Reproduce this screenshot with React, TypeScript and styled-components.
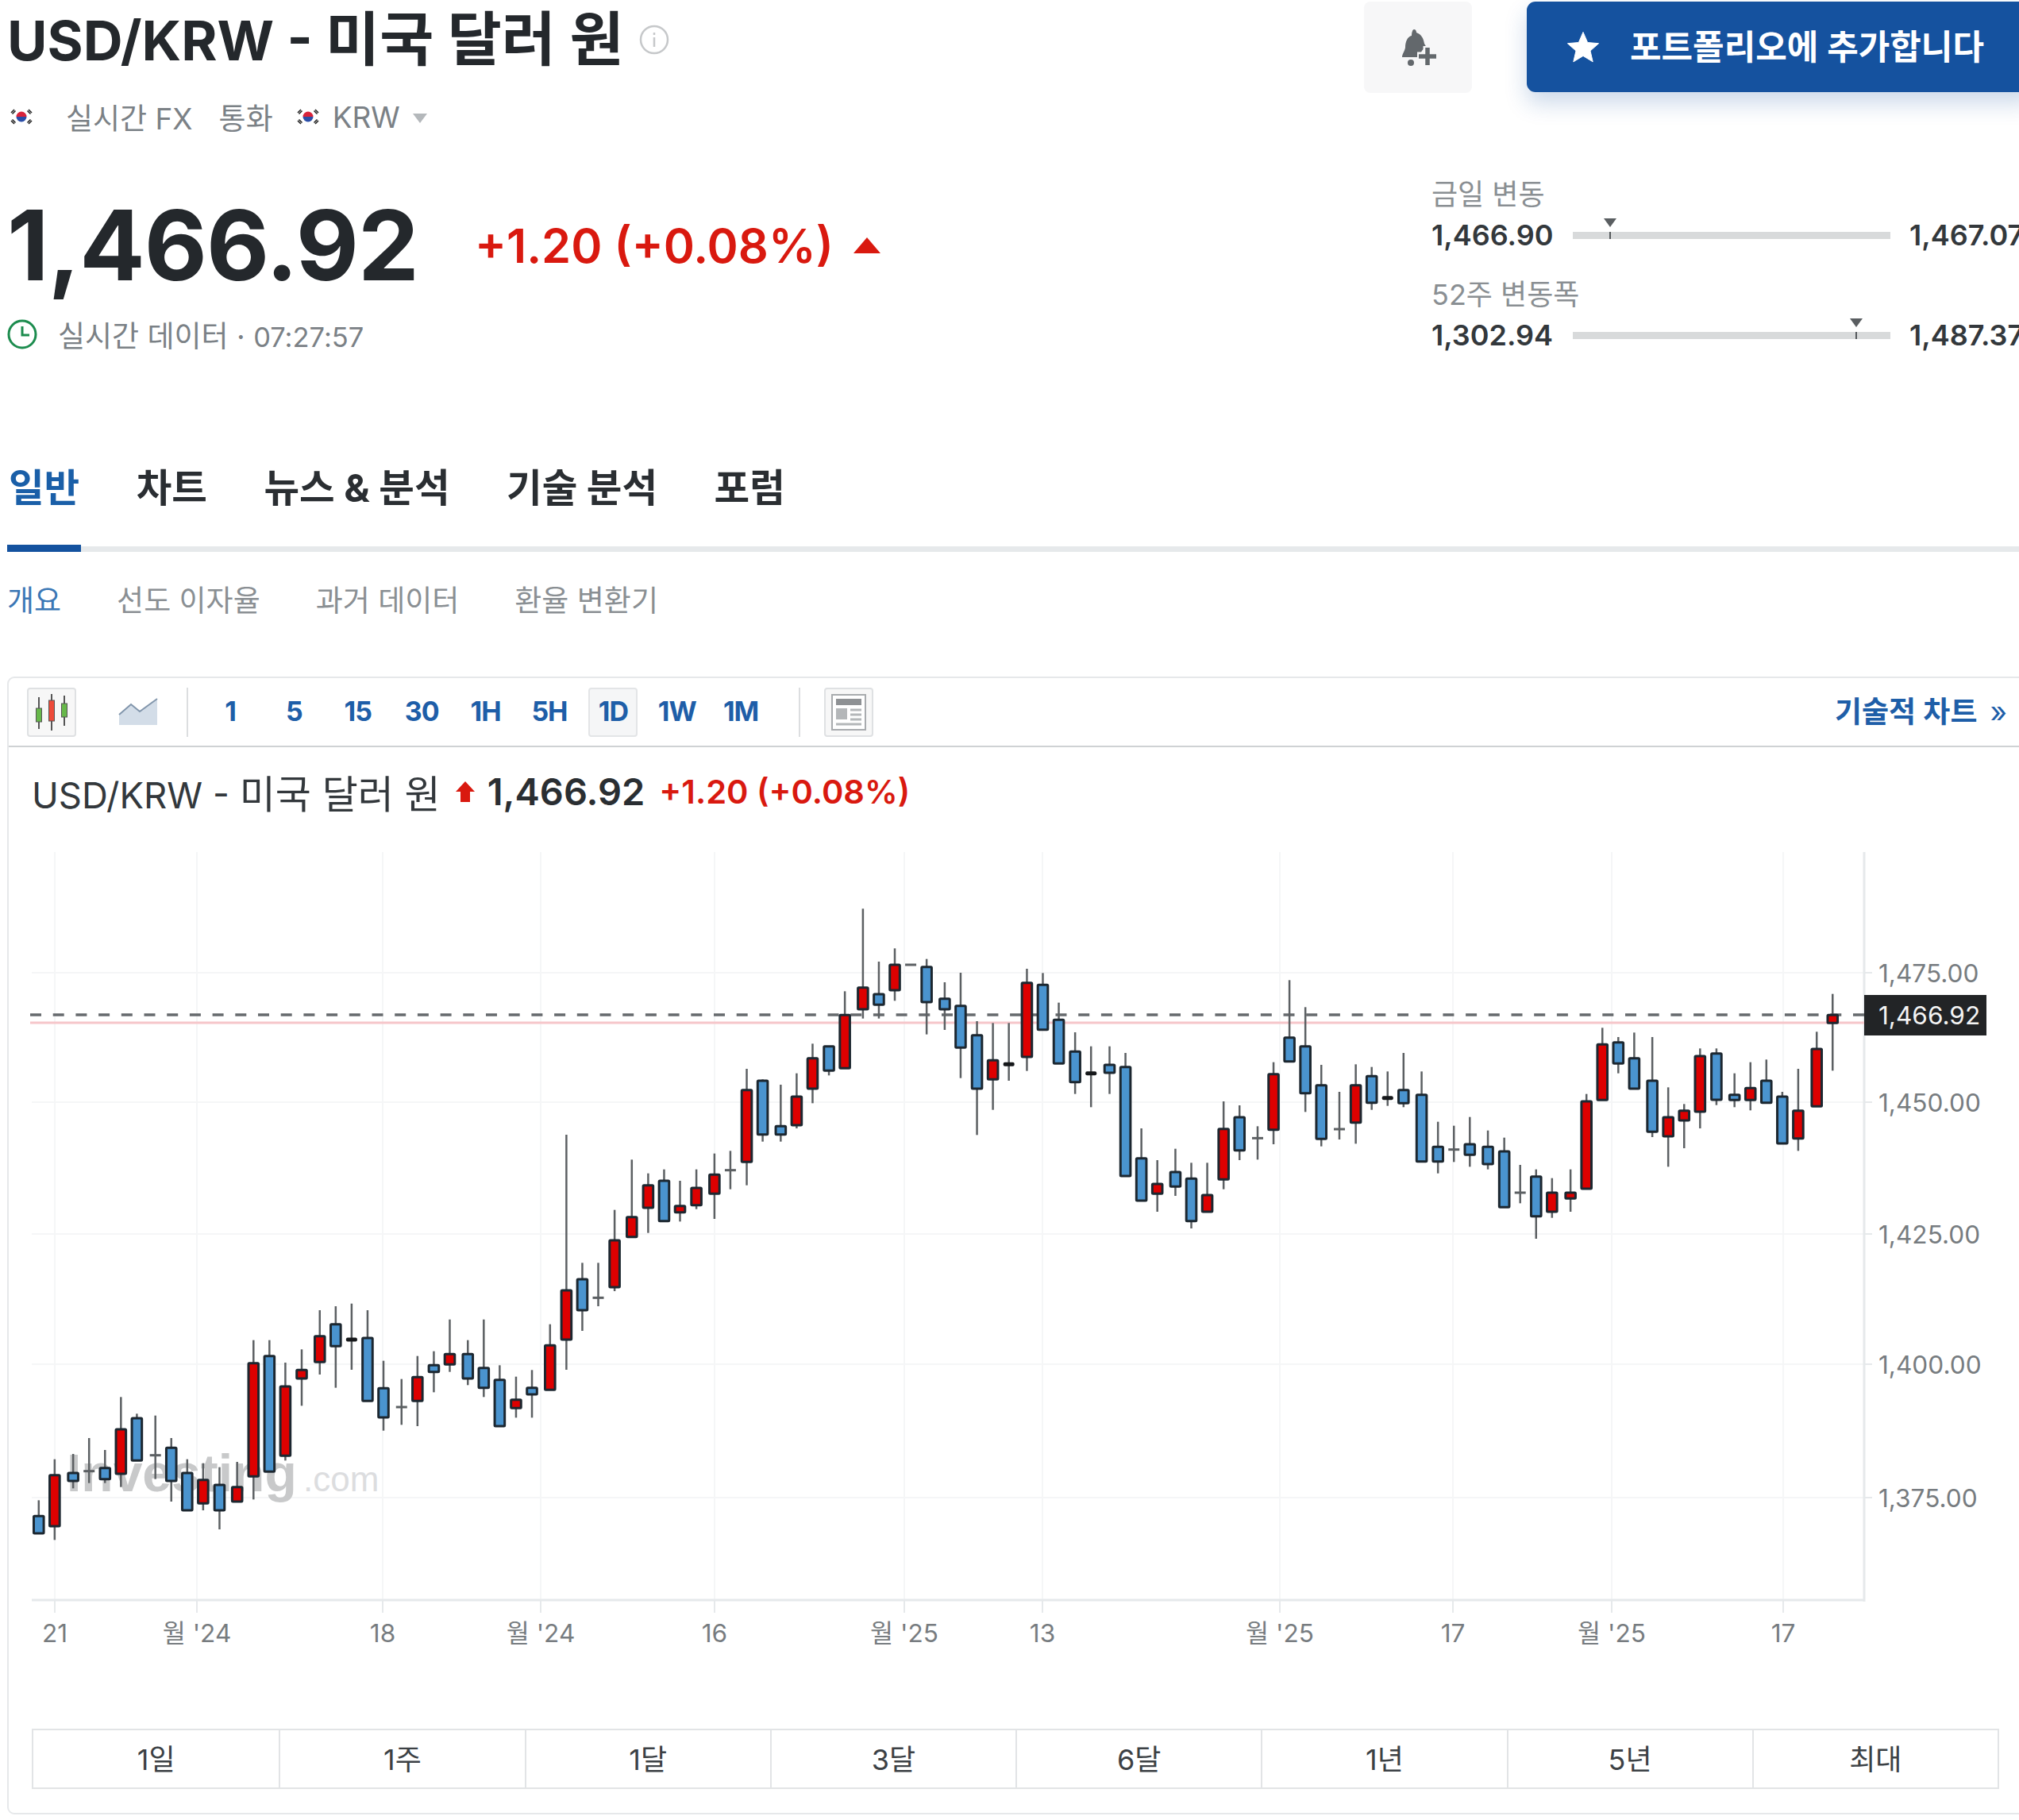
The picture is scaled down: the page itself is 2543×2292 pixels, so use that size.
import React from "react";
import styled, { createGlobalStyle } from "styled-components";

const GlobalStyle = createGlobalStyle`
  html, body { margin: 0; padding: 0; background: #fff; }
  body { font-family: Inter, "Noto Sans CJK KR", "Noto Sans", sans-serif; color: #24282c; }
`;

const Page = styled.div`
  width: 2543px;
  height: 2292px;
  overflow: hidden;
`;

const Inner = styled.div`
  width: 2569px;
  padding-left: 9px;
  box-sizing: border-box;
`;

const Header = styled.header`
  display: flex;
  height: 585px;
`;

const LeftCol = styled.div`
  width: 1709px;
  flex-shrink: 0;
`;

const TitleRow = styled.div`
  display: flex;
  align-items: center;
  gap: 19px;
  height: 100px;
`;

const Title = styled.h1`
  margin: 0;
  font-size: 69px;
  line-height: 100px;
  font-weight: 700;
  color: #24282c;
  white-space: nowrap;
`;

const TitleKo = styled.span`
  font-size: 74px;
`;

const Meta = styled.div`
  display: flex;
  align-items: center;
  height: 46px;
  margin-top: 24px;
  font-size: 37px;
  color: #7b8186;
`;

const MetaText = styled.span<{ $left: number }>`
  margin-left: ${(p) => p.$left}px;
  white-space: nowrap;
`;

const FlagWrap = styled.span<{ $left: number }>`
  display: inline-flex;
  margin-left: ${(p) => p.$left}px;
`;

const Caret = styled.span`
  width: 0;
  height: 0;
  margin: 4px 0 0 16px;
  border-left: 9px solid transparent;
  border-right: 9px solid transparent;
  border-top: 12px solid #b4b8bb;
`;

const PriceRow = styled.div`
  display: flex;
  align-items: center;
  height: 140px;
  margin-top: 69px;
`;

const Price = styled.div`
  font-size: 122px;
  font-weight: 700;
  color: #24282c;
  line-height: 140px;
  letter-spacing: -1px;
`;

const Change = styled.div`
  margin-left: 71px;
  font-size: 59.5px;
  font-weight: 600;
  color: #d9190f;
  white-space: nowrap;
`;

const UpTriangle = styled.span`
  width: 0;
  height: 0;
  margin-left: 25px;
  border-left: 17px solid transparent;
  border-right: 17px solid transparent;
  border-bottom: 20px solid #d9190f;
`;

const LiveRow = styled.div`
  display: flex;
  align-items: center;
  gap: 26px;
  height: 46px;
  margin-top: 19px;
  font-size: 37px;
  color: #7b8186;
`;

const LiveTime = styled.span`
  font-size: 34.5px;
`;

const RightCol = styled.div`
  flex: 1;
  padding-top: 2px;
`;

const Actions = styled.div`
  display: flex;
  gap: 69px;
  height: 115px;
`;

const BellButton = styled.button`
  display: flex;
  align-items: center;
  justify-content: center;
  width: 136px;
  height: 115px;
  padding: 0;
  border: none;
  border-radius: 8px;
  background: #f7f7f8;
`;

const PortfolioButton = styled.button`
  display: flex;
  align-items: center;
  gap: 38px;
  width: 640px;
  height: 114px;
  padding: 0 0 0 50px;
  border: none;
  border-radius: 11px;
  background: #15529f;
  color: #fff;
  font-family: inherit;
  font-size: 43px;
  font-weight: 600;
  white-space: nowrap;
  box-shadow: 0 14px 28px rgba(21, 82, 159, 0.22);
`;

const PortfolioLabel = styled.span`
  padding-bottom: 6px;
`;

const Ranges = styled.div`
  padding: 104px 0 0 85px;
`;

const RangeLabel = styled.div<{ $top?: number }>`
  margin-top: ${(p) => p.$top ?? 0}px;
  height: 48px;
  line-height: 48px;
  font-size: 36px;
  color: #8a8f93;
  white-space: nowrap;
`;

const RangeRow = styled.div`
  display: flex;
  align-items: center;
  height: 52px;
  margin-top: 1px;
  font-size: 36px;
  font-weight: 600;
  color: #33383c;
`;

const RangeLow = styled.span`
  width: 178px;
  flex-shrink: 0;
`;

const RangeHigh = styled.span`
  margin-left: 24px;
`;

const RangeBar = styled.div`
  position: relative;
  width: 400px;
  height: 9px;
  background: #d8dadb;
`;

const RangeMarker = styled.div<{ $at: number }>`
  position: absolute;
  left: ${(p) => p.$at}px;
  top: 0;
  width: 2px;
  height: 9px;
  background: #55595c;

  &::before {
    content: "";
    position: absolute;
    left: -7px;
    top: -17px;
    border-left: 8px solid transparent;
    border-right: 8px solid transparent;
    border-top: 11px solid #5a5e61;
  }
`;

const TabBar = styled.nav`
  display: flex;
  gap: 67.5px;
  height: 110px;
  box-sizing: border-box;
  border-bottom: 7px solid #e6e9eb;
`;

const Tab = styled.a<{ $active?: boolean }>`
  height: 110px;
  box-sizing: border-box;
  padding: 0 2px;
  line-height: 60px;
  font-size: 48.5px;
  font-weight: 700;
  white-space: nowrap;
  color: ${(p) => (p.$active ? "#1a5fa8" : "#2a2e32")};
  border-bottom: ${(p) => (p.$active ? "9px solid #14529f" : "none")};
`;

const SubTabs = styled.div`
  display: flex;
  gap: 70px;
  margin-top: 37px;
  height: 50px;
  line-height: 50px;
  font-size: 37px;
`;

const SubTab = styled.a<{ $active?: boolean }>`
  color: ${(p) => (p.$active ? "#3b77b5" : "#8a8f93")};
  white-space: nowrap;
`;

const ChartCard = styled.section`
  margin-top: 70px;
  box-sizing: border-box;
  height: 1433px;
  border: 2px solid #e6e8ea;
  border-radius: 9px;
  background: #fff;
`;

const Toolbar = styled.div`
  display: flex;
  align-items: center;
  height: 85px;
  padding: 0 39px 0 23px;
  border-bottom: 2px solid #cfd2d4;
`;

const IconButton = styled.button<{ $boxed?: boolean; $left?: number }>`
  display: flex;
  align-items: center;
  justify-content: center;
  width: 62px;
  height: 62px;
  padding: 0;
  margin-left: ${(p) => p.$left ?? 0}px;
  box-sizing: border-box;
  border: ${(p) => (p.$boxed ? "2px solid #dfe1e3" : "none")};
  border-radius: 4px;
  background: ${(p) => (p.$boxed ? "#f7f7f7" : "transparent")};
`;

const Divider = styled.div<{ $left: number; $right: number }>`
  width: 2px;
  height: 62px;
  margin: 0 ${(p) => p.$right}px 0 ${(p) => p.$left}px;
  background: #dcdee0;
`;

const Intervals = styled.div`
  display: flex;
  gap: 18.4px;
`;

const Interval = styled.button<{ $active?: boolean }>`
  width: 62px;
  height: 62px;
  padding: 0 0 2px;
  box-sizing: border-box;
  border: ${(p) => (p.$active ? "2px solid #e3e5e7" : "2px solid transparent")};
  border-radius: 4px;
  background: ${(p) => (p.$active ? "#f5f6f7" : "transparent")};
  color: #1e5ea8;
  font-family: inherit;
  font-size: 34px;
  font-weight: 700;
  letter-spacing: -1px;
`;

const TechLink = styled.a`
  margin-left: auto;
  padding-bottom: 6px;
  font-size: 37px;
  font-weight: 600;
  color: #1e5ea8;
  white-space: nowrap;
`;

const TechChevron = styled.span`
  margin-left: 16px;
  font-weight: 400;
`;

const QuoteRow = styled.div`
  display: flex;
  align-items: center;
  height: 116px;
  box-sizing: border-box;
  padding: 0 0 5px 29px;
  white-space: nowrap;
`;

const QuoteName = styled.span`
  font-size: 45.5px;
  color: #33383c;
`;

const QuoteKo = styled.span`
  font-size: 49px;
`;

const QuotePrice = styled.span`
  margin-left: 15px;
  font-size: 47px;
  font-weight: 600;
  color: #2a2e32;
`;

const QuoteChange = styled.span`
  margin-left: 18px;
  font-size: 41.6px;
  font-weight: 600;
  color: #d9190f;
`;

const ChartSvg = styled.svg`
  display: block;
`;

const Watermark = styled.text<{ $light?: boolean }>`
  font-family: "Liberation Sans", Arial, sans-serif;
  font-size: ${(p) => (p.$light ? 44 : 66)}px;
  font-weight: ${(p) => (p.$light ? 400 : 700)};
  fill: ${(p) => (p.$light ? "#dcdddf" : "#c8c9ca")};
`;

const AxisLabel = styled.text`
  font-family: Inter, "Noto Sans CJK KR", sans-serif;
  font-size: 31.6px;
  fill: #777c80;
`;

const LastLabel = styled.text`
  font-family: Inter, sans-serif;
  font-size: 31.6px;
  fill: #f4f4f4;
`;

const PeriodBar = styled.div`
  display: grid;
  grid-template-columns: repeat(8, 1fr);
  width: 2478px;
  height: 76px;
  margin: 66px 0 0 29px;
  box-sizing: border-box;
  border: 2px solid #e2e4e6;
`;

const Period = styled.div`
  display: flex;
  align-items: center;
  justify-content: center;
  padding-bottom: 5px;
  font-size: 36px;
  color: #3c4145;

  & + & {
    border-left: 2px solid #e2e4e6;
  }
`;

const KoreanFlag = () => (
  <svg width="30" height="22" viewBox="0 0 30 22">
    <rect width="30" height="22" fill="#fff" />
    <path d="M8.5 11a6.5 6.5 0 0 1 13 0z" fill="#d8233b" />
    <path d="M8.5 11a6.5 6.5 0 0 0 13 0z" fill="#2a4ea8" />
    <g stroke="#222" strokeWidth="1.6">
      <path d="M2 6l4-4M3.5 7.5l4-4" />
      <path d="M28 6l-4-4M26.5 7.5l-4-4" />
      <path d="M2 16l4 4M3.5 14.5l4 4" />
      <path d="M28 16l-4 4M26.5 14.5l-4 4" />
    </g>
  </svg>
);

const InfoIcon = () => (
  <svg width="38" height="38" viewBox="0 0 38 38" fill="none">
    <circle cx="19" cy="19" r="17" stroke="#c6c8ca" strokeWidth="2.5" />
    <path d="M19 16v12M19 10v3" stroke="#c6c8ca" strokeWidth="2.5" />
  </svg>
);

const ClockIcon = () => (
  <svg width="38" height="38" viewBox="0 0 38 38" fill="none">
    <circle cx="19" cy="19" r="17" stroke="#1c8c4e" strokeWidth="3" />
    <path d="M19 9v11h9" stroke="#1c8c4e" strokeWidth="3" />
  </svg>
);

const BellPlusIcon = () => (
  <svg width="48" height="48" viewBox="0 0 48 48" style={{ marginLeft: 4 }}>
    <path
      d="M17 1c2 0 3 2 3 4 6 2 9 7 10 14l3 5c-5 1-8 5-8 12H2c0-4 3-7 4-12 0-8 3-14 8-15 0-4 1-8 3-8z"
      fill="#63686c"
    />
    <circle cx="13" cy="43" r="4" fill="#63686c" />
    <path d="M34 22v26M21 35h26" stroke="#f7f7f8" strokeWidth="11" />
    <path d="M34 24v22M23 35h22" stroke="#63686c" strokeWidth="5.5" />
  </svg>
);

const StarIcon = () => (
  <svg width="42" height="40" viewBox="0 0 42 40">
    <path
      d="M21 1.5l5.6 13 14 1.2-10.6 9.3 3.2 13.8L21 31.4 8.8 38.8 12 25 1.4 15.7l14-1.2z"
      fill="#fff"
      stroke="#fff"
      strokeLinejoin="round"
    />
  </svg>
);

const CandleIcon = () => (
  <svg width="46" height="50" viewBox="0 0 46 50">
    <g stroke="#555" strokeWidth="2">
      <path d="M7 6v40M23 2v46M39 4v38" />
    </g>
    <rect x="3.5" y="20" width="7" height="17" fill="#67b84a" stroke="#555" />
    <rect x="19.5" y="10" width="7" height="26" fill="#ee4b3a" stroke="#555" />
    <rect x="35.5" y="14" width="7" height="17" fill="#67b84a" stroke="#555" />
  </svg>
);

const AreaIcon = () => (
  <svg width="50" height="36" viewBox="0 0 50 36">
    <path d="M1 21l15-13 11 9L49 1v33H1z" fill="#d3dde8" />
    <path d="M1 21l15-13 11 9L49 1" fill="none" stroke="#8296ac" strokeWidth="2" />
  </svg>
);

const NewsIcon = () => (
  <svg width="46" height="50" viewBox="0 0 46 50">
    <rect x="2" y="3" width="42" height="44" fill="#fff" stroke="#a8abae" strokeWidth="2" />
    <rect x="7" y="8" width="32" height="8" fill="#8e9194" />
    <rect x="7" y="20" width="14" height="14" fill="#b4b7b9" />
    <path d="M25 22h14M25 28h14M25 34h14M7 40h32" stroke="#b4b7b9" strokeWidth="3" />
  </svg>
);

const ArrowUpIcon = () => (
  <svg width="26" height="28" viewBox="0 0 26 28" style={{ marginLeft: 18 }}>
    <path d="M13 1l12 13h-6v13H7V14H1z" fill="#d9190f" />
  </svg>
);

type Row = [number, number, number, number, number, string];

// [x, high, bodyTop, bodyBottom, low, kind], read off the crops; each block has its own scale
const firstBlock: Row[] = [
  [90, 1015, 1075, 1140, 1140, "b"], [127, 860, 920, 1113, 1165, "r"], [170, 840, 912, 942, 970, "b"],
  [207, 780, 905, 905, 950, "d"], [244, 825, 893, 935, 950, "b"], [281, 625, 747, 915, 965, "r"],
  [318, 688, 705, 865, 865, "b"], [361, 695, 845, 845, 935, "d"], [398, 780, 817, 942, 1020, "b"],
  [435, 860, 912, 1053, 1053, "b"], [472, 875, 938, 1027, 1053, "r"], [510, 890, 957, 1053, 1125, "b"],
  [551, 870, 965, 1020, 1020, "r"], [589, 410, 497, 925, 1012, "r"], [626, 410, 470, 907, 907, "b"],
  [663, 495, 585, 847, 865, "r"], [701, 445, 523, 555, 658, "r"], [743, 297, 395, 493, 540, "r"],
  [780, 282, 350, 433, 590, "b"], [817, 272, 408, 408, 522, "k"], [854, 297, 402, 640, 640, "b"],
  [891, 488, 592, 702, 752, "b"], [933, 557, 663, 663, 730, "d"], [970, 470, 550, 640, 735, "r"],
  [1008, 452, 505, 530, 607, "b"], [1045, 332, 463, 502, 530, "r"], [1087, 410, 463, 555, 580, "b"],
  [1124, 332, 515, 590, 625, "b"], [1161, 505, 560, 735, 735, "b"], [1199, 548, 635, 667, 703, "r"],
  [1236, 523, 590, 615, 703, "b"], [1278, 350, 430, 598, 598, "r"], [1316, -366, 222, 408, 522, "r"],
  [1353, 118, 180, 297, 375, "b"], [1390, 118, 250, 250, 282, "d"], [1428, -82, 33, 210, 225, "r"],
  [1468, -272, -55, 20, 20, "r"], [1506, -220, -175, -90, 5, "r"], [1543, -235, -192, -40, -40, "b"],
];

const middleBlock: Row[] = [
  [12, 1278, 1373, 1397, 1432, "r"], [50, 1235, 1305, 1370, 1385, "r"], [92, 1175, 1255, 1327, 1422, "r"],
  [129, 1165, 1238, 1238, 1310, "d"], [167, 855, 935, 1207, 1295, "r"], [204, 895, 900, 1103, 1130, "b"],
  [246, 915, 1072, 1103, 1130, "b"], [283, 872, 960, 1068, 1080, "r"], [320, 760, 815, 930, 985, "r"],
  [358, 770, 770, 862, 880, "b"], [395, 562, 652, 853, 853, "r"], [437, 250, 548, 630, 665, "r"],
  [474, 450, 573, 613, 665, "b"], [511, 400, 462, 558, 598, "r"], [548, 462, 462, 462, 462, "d"],
  [585, 440, 470, 603, 725, "b"], [627, 528, 590, 630, 708, "b"], [664, 492, 617, 775, 890, "b"],
  [702, 675, 728, 930, 1105, "b"], [739, 682, 823, 895, 1010, "r"], [776, 682, 838, 838, 900, "k"],
  [818, 477, 530, 810, 863, "r"], [855, 493, 538, 707, 707, "b"], [892, 605, 670, 835, 835, "b"],
  [930, 717, 790, 905, 950, "b"], [967, 770, 872, 872, 1000, "k"], [1010, 770, 840, 870, 950, "b"],
  [1047, 795, 848, 1260, 1260, "b"], [1084, 1080, 1193, 1353, 1353, "b"], [1121, 1200, 1290, 1327, 1395, "r"],
  [1163, 1157, 1245, 1300, 1335, "b"], [1200, 1210, 1270, 1430, 1458, "b"], [1237, 1210, 1332, 1395, 1395, "r"],
  [1275, 978, 1082, 1273, 1310, "r"], [1312, 993, 1038, 1163, 1200, "b"], [1354, 1072, 1117, 1117, 1198, "d"],
  [1391, 830, 875, 1085, 1140, "r"], [1428, 520, 737, 827, 827, "b"], [1465, 622, 770, 947, 1018, "b"],
  [1502, 840, 917, 1120, 1148, "b"], [1544, 942, 1083, 1083, 1122, "d"],
];

const lastBlock: Row[] = [
  [27, 838, 917, 1058, 1138, "r"], [64, 848, 883, 983, 1010, "b"], [101, 865, 965, 965, 995, "k"],
  [138, 795, 935, 985, 1000, "b"], [180, 865, 953, 1205, 1205, "b"], [218, 1055, 1150, 1205, 1250, "b"],
  [255, 1070, 1160, 1160, 1207, "d"], [292, 1037, 1140, 1180, 1225, "b"], [334, 1088, 1150, 1215, 1235, "b"],
  [372, 1115, 1167, 1378, 1378, "b"], [409, 1218, 1323, 1323, 1363, "d"], [446, 1235, 1262, 1412, 1497, "b"],
  [483, 1268, 1323, 1395, 1418, "r"], [526, 1235, 1323, 1345, 1395, "r"], [563, 950, 978, 1308, 1308, "r"],
  [600, 700, 763, 973, 973, "r"], [637, 735, 755, 835, 872, "b"], [674, 718, 815, 930, 930, "b"],
  [716, 735, 900, 1093, 1113, "b"], [753, 925, 1038, 1110, 1225, "r"], [790, 988, 1013, 1050, 1155, "r"],
  [827, 778, 807, 1017, 1080, "r"], [865, 778, 797, 972, 992, "b"], [907, 872, 953, 973, 1000, "b"],
  [944, 830, 928, 973, 1012, "r"], [981, 820, 900, 983, 983, "b"], [1018, 942, 960, 1137, 1137, "b"],
  [1055, 855, 1013, 1118, 1165, "r"], [1098, 715, 780, 997, 997, "r"], [1135, 572, 652, 682, 862, "r"],
];

const X_SCALE = 1568 / 850;
const place = (rows: Row[], ox: number, oy: number): Row[] =>
  rows.map(([x, hi, top, bot, lo, kind]) => [
    ox + x / X_SCALE,
    oy + hi / 3,
    oy + top / 3,
    oy + bot / 3,
    oy + lo / 3,
    kind,
  ]);

const candles: Row[] = [
  ...place(firstBlock, 0, 1550),
  ...place(middleBlock, 850, 1060),
  ...place(lastBlock, 1693, 1060),
];

const Candle = ({ row }: { row: Row }) => {
  const [x, hi, top, bot, lo, kind] = row;
  return (
    <g>
      <line x1={x} x2={x} y1={hi} y2={lo} stroke="#5c6063" strokeWidth={2.5} />
      {kind === "d" && <line x1={x - 7} x2={x + 7} y1={top} y2={top} stroke="#5c6063" strokeWidth={3} />}
      {kind === "k" && <rect x={x - 7} y={top - 2.5} width={14} height={5} rx={2} fill="#16181a" />}
      {(kind === "r" || kind === "b") && (
        <rect
          x={x - 6.3}
          y={top}
          width={12.6}
          height={bot - top}
          rx={1}
          fill={kind === "r" ? "#dd0000" : "#4a94cf"}
          stroke="#1c2730"
          strokeWidth={3}
        />
      )}
    </g>
  );
};

const priceTicks = [
  { y: 1224, label: "1,475.00" },
  { y: 1387, label: "1,450.00" },
  { y: 1553, label: "1,425.00" },
  { y: 1717, label: "1,400.00" },
  { y: 1885, label: "1,375.00" },
];

const timeTicks = [
  { x: 69, label: "21" },
  { x: 248, label: "월 '24" },
  { x: 482, label: "18" },
  { x: 681, label: "월 '24" },
  { x: 900, label: "16" },
  { x: 1139, label: "월 '25" },
  { x: 1313, label: "13" },
  { x: 1612, label: "월 '25" },
  { x: 1830, label: "17" },
  { x: 2030, label: "월 '25" },
  { x: 2246, label: "17" },
];

const Chart = () => (
  <ChartSvg width={2556} height={1054} viewBox="11 1056 2556 1054">
    {priceTicks.map((t) => (
      <g key={t.y}>
        <line x1={40} x2={2348} y1={t.y} y2={t.y} stroke="#f5f6f7" strokeWidth={2} />
        <line x1={2348} x2={2358} y1={t.y} y2={t.y} stroke="#e6e9eb" strokeWidth={2} />
        <AxisLabel x={2366} y={t.y} dominantBaseline="central">
          {t.label}
        </AxisLabel>
      </g>
    ))}
    {timeTicks.map((t) => (
      <g key={t.x}>
        <line x1={t.x} x2={t.x} y1={1072} y2={2014} stroke="#f5f6f7" strokeWidth={2} />
        <line x1={t.x} x2={t.x} y1={2014} y2={2030} stroke="#e6e9eb" strokeWidth={2} />
        <AxisLabel x={t.x} y={2055} textAnchor="middle" dominantBaseline="central">
          {t.label}
        </AxisLabel>
      </g>
    ))}
    <line x1={2348} x2={2348} y1={1072} y2={2016} stroke="#e6e9eb" strokeWidth={3} />
    <line x1={40} x2={2348} y1={2014} y2={2014} stroke="#e6e9eb" strokeWidth={3} />

    <Watermark x={84} y={1877}>
      Investing
    </Watermark>
    <Watermark $light x={382} y={1877}>
      .com
    </Watermark>

    <line x1={38} x2={2348} y1={1287} y2={1287} stroke="#f6c6ca" strokeWidth={3} />
    <line x1={38} x2={2348} y1={1277} y2={1277} stroke="#666a6d" strokeWidth={3.5} strokeDasharray="14 14.7" />

    {candles.map((row, i) => (
      <Candle key={i} row={row} />
    ))}

    <rect x={2348} y={1252} width={154} height={51} fill="#222426" />
    <LastLabel x={2366} y={1277} dominantBaseline="central">
      1,466.92
    </LastLabel>
  </ChartSvg>
);

const tabs = ["일반", "차트", "뉴스 & 분석", "기술 분석", "포럼"];
const subTabs = ["개요", "선도 이자율", "과거 데이터", "환율 변환기"];
const intervals = ["1", "5", "15", "30", "1H", "5H", "1D", "1W", "1M"];
const periods = ["1일", "1주", "1달", "3달", "6달", "1년", "5년", "최대"];

const App: React.FC = () => (
  <Page>
    <GlobalStyle />
    <Inner>
      <Header>
        <LeftCol>
          <TitleRow>
            <Title>
              USD/KRW - <TitleKo>미국 달러 원</TitleKo>
            </Title>
            <InfoIcon />
          </TitleRow>
          <Meta>
            <FlagWrap $left={3}>
              <KoreanFlag />
            </FlagWrap>
            <MetaText $left={41}>실시간 FX</MetaText>
            <MetaText $left={33}>통화</MetaText>
            <FlagWrap $left={29}>
              <KoreanFlag />
            </FlagWrap>
            <MetaText $left={16}>KRW</MetaText>
            <Caret />
          </Meta>
          <PriceRow>
            <Price>1,466.92</Price>
            <Change>+1.20 (+0.08%)</Change>
            <UpTriangle />
          </PriceRow>
          <LiveRow>
            <ClockIcon />
            <span>
              실시간 데이터 · <LiveTime>07:27:57</LiveTime>
            </span>
          </LiveRow>
        </LeftCol>
        <RightCol>
          <Actions>
            <BellButton>
              <BellPlusIcon />
            </BellButton>
            <PortfolioButton>
              <StarIcon />
              <PortfolioLabel>포트폴리오에 추가합니다</PortfolioLabel>
            </PortfolioButton>
          </Actions>
          <Ranges>
            <RangeLabel>금일 변동</RangeLabel>
            <RangeRow>
              <RangeLow>1,466.90</RangeLow>
              <RangeBar>
                <RangeMarker $at={46} />
              </RangeBar>
              <RangeHigh>1,467.07</RangeHigh>
            </RangeRow>
            <RangeLabel $top={25}>52주 변동폭</RangeLabel>
            <RangeRow>
              <RangeLow>1,302.94</RangeLow>
              <RangeBar>
                <RangeMarker $at={356} />
              </RangeBar>
              <RangeHigh>1,487.37</RangeHigh>
            </RangeRow>
          </Ranges>
        </RightCol>
      </Header>

      <TabBar>
        {tabs.map((t, i) => (
          <Tab key={t} $active={i === 0}>
            {t}
          </Tab>
        ))}
      </TabBar>
      <SubTabs>
        {subTabs.map((t, i) => (
          <SubTab key={t} $active={i === 0}>
            {t}
          </SubTab>
        ))}
      </SubTabs>

      <ChartCard>
        <Toolbar>
          <IconButton $boxed>
            <CandleIcon />
          </IconButton>
          <IconButton $left={47}>
            <AreaIcon />
          </IconButton>
          <Divider $left={30} $right={22} />
          <Intervals>
            {intervals.map((v) => (
              <Interval key={v} $active={v === "1D"}>
                {v}
              </Interval>
            ))}
          </Intervals>
          <Divider $left={42} $right={30} />
          <IconButton $boxed>
            <NewsIcon />
          </IconButton>
          <TechLink>
            기술적 차트<TechChevron>»</TechChevron>
          </TechLink>
        </Toolbar>
        <QuoteRow>
          <QuoteName>
            USD/KRW - <QuoteKo>미국 달러 원</QuoteKo>
          </QuoteName>
          <ArrowUpIcon />
          <QuotePrice>1,466.92</QuotePrice>
          <QuoteChange>+1.20 (+0.08%)</QuoteChange>
        </QuoteRow>
        <Chart />
        <PeriodBar>
          {periods.map((p) => (
            <Period key={p}>{p}</Period>
          ))}
        </PeriodBar>
      </ChartCard>
    </Inner>
  </Page>
);

export default App;
